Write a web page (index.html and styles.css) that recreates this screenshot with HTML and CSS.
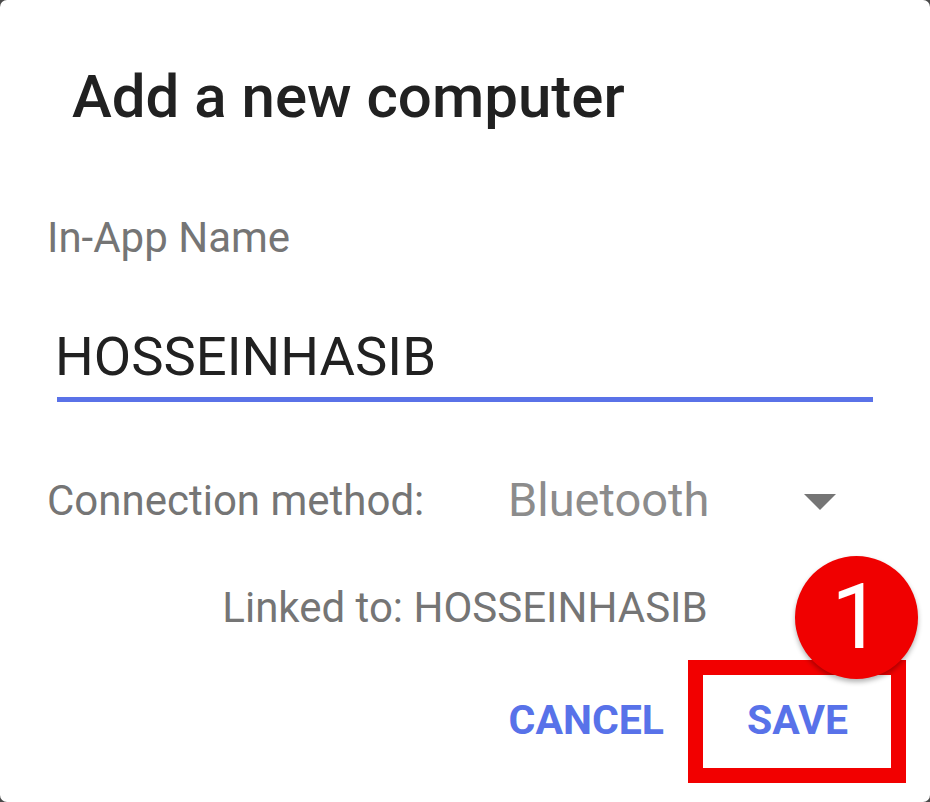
FILE: index.html
```html
<!DOCTYPE html>
<html>
<head>
<meta charset="utf-8">
<link rel="stylesheet" href="styles.css">
</head>
<body>
<div class="dialog">
  <h1 class="title">Add a new computer</h1>
  <div class="label">In-App Name</div>
  <div class="input">HOSSEINHASIB</div>
  <div class="method-row">
    <span class="method-label">Connection method:</span>
    <span class="method-value">Bluetooth</span>
    <svg class="arrow" width="32" height="16" viewBox="0 0 32 16"><path d="M0 0 L32 0 L16 16 Z" fill="#757575"/></svg>
  </div>
  <div class="linked">Linked to: HOSSEINHASIB</div>
  <div class="actions">
    <span class="btn">CANCEL</span>
    <span class="btn">SAVE</span>
  </div>
  <div class="highlight"></div>
  <div class="badge">1</div>
</div>
</body>
</html>
```

FILE: styles.css
```css
html, body {
  margin: 0;
  padding: 0;
}
body {
  background: #4a4a4a;
  width: 930px;
  height: 802px;
  overflow: hidden;
  font-family: Roboto, "Liberation Sans", sans-serif;
}
.dialog {
  position: relative;
  box-sizing: border-box;
  width: 930px;
  height: 802px;
  background: #ffffff;
  border-radius: 7px;
  padding: 61px 0 0 47px;
}
.title {
  margin: 0 0 0 25px;
  font-size: 60px;
  line-height: 72px;
  font-weight: 500;
  color: #212121;
}
.label {
  margin-top: 80px;
  font-size: 42px;
  line-height: 50px;
  color: #757575;
}
.input {
  margin: 62px 0 0 10px;
  width: 816px;
  box-sizing: border-box;
  padding: 0 0 8px 0;
  text-indent: -2px;
  font-size: 54.4px;
  line-height: 64px;
  color: #212121;
  border-bottom: 5px solid #5a72e8;
}
.method-row {
  display: flex;
  align-items: flex-start;
  margin-top: 73px;
  font-size: 42px;
  line-height: 52px;
}
.method-label {
  color: #757575;
  width: 461px;
}
.method-value {
  color: #8c8c8c;
  width: 296px;
  font-size: 47px;
  margin-top: -1px;
}
.arrow {
  margin-top: 19px;
}
.linked {
  margin: 57px 0 0 -47px;
  text-align: center;
  font-size: 42px;
  line-height: 48px;
  color: #757575;
}
.actions {
  display: flex;
  justify-content: flex-end;
  gap: 83px;
  margin-top: 64px;
  padding-right: 82px;
  font-size: 41px;
  line-height: 48px;
  font-weight: 700;
  color: #5872e9;
}
.highlight {
  position: absolute;
  left: 688px;
  top: 660px;
  width: 218px;
  height: 123px;
  box-sizing: border-box;
  border: 15px solid #f20000;
}
.badge {
  position: absolute;
  left: 795px;
  top: 556px;
  width: 123px;
  height: 123px;
  border-radius: 50%;
  background: #f00000;
  box-shadow: 0 3px 5px rgba(0, 0, 0, 0.3);
  color: #ffffff;
  font-size: 90px;
  line-height: 123px;
  text-align: center;
}
```
